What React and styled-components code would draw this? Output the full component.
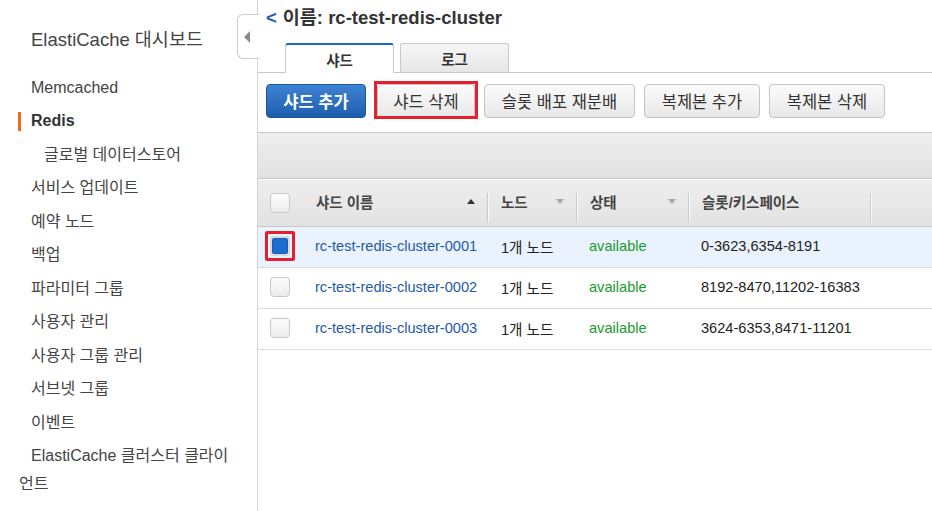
import React from "react";
import styled, { createGlobalStyle, css } from "styled-components";

const GlobalStyle = createGlobalStyle`
  html, body {
    margin: 0;
    padding: 0;
    background: #fff;
    font-family: "Liberation Sans", "Noto Sans CJK KR", sans-serif;
    color: #333;
  }
`;

const Page = styled.div`
  display: flex;
  min-height: 100vh;
  overflow: hidden;
`;

const Sidebar = styled.nav`
  position: relative;
  width: 258px;
  flex-shrink: 0;
  border-right: 1px solid #d5d5d5;
  padding-top: 27px;
  box-sizing: border-box;
`;

const SideTitle = styled.div`
  padding-left: 31px;
  font-size: 18.5px;
  line-height: 26px;
  color: #444;
  margin-bottom: 18px;
`;

const SideItem = styled.div`
  position: relative;
  padding: 2.75px 22px 2.75px 19px;
  text-indent: ${(p) => (p.$sub ? 25 : 12)}px;
  font-size: 16px;
  line-height: 28px;
  color: #444;

  ${(p) =>
    p.$active &&
    css`
      font-weight: bold;
      color: #333;
      &::before {
        content: "";
        position: absolute;
        left: 18px;
        top: 7px;
        width: 3px;
        height: 19px;
        background: #f26b1d;
      }
    `}
`;

const CollapseTab = styled.div`
  position: absolute;
  top: 14px;
  left: 237px;
  width: 21px;
  height: 43px;
  background: #fff;
  border: 1px solid #ccc;
  border-right: none;
  border-radius: 6px 0 0 6px;
  display: flex;
  align-items: center;
  justify-content: center;

  &::after {
    content: "";
    border-style: solid;
    border-width: 6px 6px 6px 0;
    border-color: transparent #8a8a8a transparent transparent;
    margin-left: -3px;
  }
`;

const Main = styled.main`
  flex: 1;
  min-width: 0;
`;

const Title = styled.h1`
  margin: 0;
  padding-left: 8px;
  height: 36px;
  line-height: 36px;
  font-size: 18.5px;
  font-weight: bold;
  color: #333;

  span {
    color: #1a5fb4;
    margin-right: 6px;
  }
`;

const TabBar = styled.div`
  display: flex;
  gap: 6px;
  margin-top: 7px;
  padding-left: 27px;
  border-bottom: 1px solid #c8c8c8;
  height: 29px;
`;

const Tab = styled.div`
  width: 109px;
  height: 29px;
  box-sizing: border-box;
  border: 1px solid #c8c8c8;
  border-bottom: none;
  border-radius: 3px 3px 0 0;
  display: flex;
  align-items: center;
  justify-content: center;
  font-size: 14.5px;
  font-weight: bold;
  color: #333;
  background: ${(p) =>
    p.$active ? "#fff" : "linear-gradient(#f6f6f6, #e6e6e6)"};
  ${(p) =>
    p.$active &&
    css`
      border-top: 2px solid #1a66c2;
      height: 30px;
      margin-bottom: -1px;
    `}
`;

const Toolbar = styled.div`
  display: flex;
  gap: 9px;
  padding: 11px 8px 14px;
`;

const Button = styled.button`
  position: relative;
  width: ${(p) => p.$w}px;
  height: 34px;
  box-sizing: border-box;
  border-radius: 4px;
  font-family: inherit;
  font-size: 16.5px;
  padding: 0;
  cursor: pointer;
  border: 1px solid #c4c4c4;
  color: #333;
  background: linear-gradient(#fbfbfb, #e8e8e8);
  ${(p) =>
    p.$primary &&
    css`
      border-color: #1b56a0;
      color: #fff;
      font-weight: bold;
      background: linear-gradient(#3d82d4, #1e5eac);
    `}
  ${(p) =>
    p.$marked &&
    css`
      &::after {
        content: "";
        position: absolute;
        inset: -4px -4px -2px -4px;
        border: 3px solid #e3202b;
      }
    `}
`;

const FilterBar = styled.div`
  height: 45px;
  border-top: 1px solid #c8c8c8;
  border-bottom: 1px solid #c8c8c8;
  background: linear-gradient(#efefef, #e1e1e1);
`;

const cols = "45px 185px 89px 112px 182px 1fr";

const HeadRow = styled.div`
  display: grid;
  grid-template-columns: ${cols};
  height: 46px;
  border-top: 1px solid #fff;
  border-bottom: 1px solid #c8c8c8;
  background: linear-gradient(#eeeeee, #e2e2e2);
  align-items: center;
`;

const HeadCell = styled.div`
  position: relative;
  display: flex;
  align-items: center;
  justify-content: space-between;
  height: 100%;
  padding: 0 13px 3px;
  box-sizing: border-box;
  font-size: 14.5px;
  font-weight: bold;
  color: #444;
  ${(p) =>
    p.$sep &&
    css`
      &::after {
        content: "";
        position: absolute;
        right: 0;
        top: 13px;
        bottom: 4px;
        width: 1px;
        background: #c9c9c9;
        box-shadow: 1px 0 0 #fafafa;
      }
    `}
`;

const SortArrow = styled.span`
  width: 0;
  height: 0;
  border-left: 4px solid transparent;
  border-right: 4px solid transparent;
  ${(p) =>
    p.$up
      ? css`
          border-bottom: 5px solid #333;
        `
      : css`
          border-top: 5px solid #a8a8a8;
        `}
`;

const Row = styled.div`
  display: grid;
  grid-template-columns: ${cols};
  height: 40px;
  border-bottom: 1px solid #dcdcdc;
  align-items: center;
  background: ${(p) => (p.$selected ? "#eaf2fd" : "#fff")};
  font-size: 14.6px;
  padding-bottom: 2px;
  box-sizing: content-box;
  height: 38px;
`;

const Cell = styled.div`
  padding-left: ${(p) => p.$pad ?? 12}px;
  color: ${(p) => p.$color || "#222"};
  white-space: nowrap;
`;

const CheckWrap = styled.div`
  padding-left: 12px;
  display: flex;
  align-items: center;
`;

const Check = styled.span`
  position: relative;
  display: block;
  width: 20px;
  height: 20px;
  box-sizing: border-box;
  border-radius: 4px;
  border: 1px solid #c9c9c9;
  background: linear-gradient(#fdfdfd, #ececec);
  ${(p) =>
    p.$checked &&
    css`
      border: 2px solid #d9d9d9;
      background: #1b6cce;
      box-shadow: inset 0 0 0 1px #1660b8;
      &::after {
        content: "";
        position: absolute;
        inset: -7px;
        border: 3px solid #e3202b;
        border-radius: 2px;
      }
    `}
`;

const menu = [
  { label: "Memcached" },
  { label: "Redis", active: true },
  { label: "글로벌 데이터스토어", sub: true },
  { label: "서비스 업데이트" },
  { label: "예약 노드" },
  { label: "백업" },
  { label: "파라미터 그룹" },
  { label: "사용자 관리" },
  { label: "사용자 그룹 관리" },
  { label: "서브넷 그룹" },
  { label: "이벤트" },
  { label: "ElastiCache 클러스터 클라이언트" },
];

const shards = [
  { name: "rc-test-redis-cluster-0001", slots: "0-3623,6354-8191", selected: true },
  { name: "rc-test-redis-cluster-0002", slots: "8192-8470,11202-16383" },
  { name: "rc-test-redis-cluster-0003", slots: "3624-6353,8471-11201" },
];

export default function App() {
  return (
    <Page>
      <GlobalStyle />
      <Sidebar>
        <SideTitle>ElastiCache 대시보드</SideTitle>
        {menu.map((m) => (
          <SideItem key={m.label} $active={m.active} $sub={m.sub}>
            {m.label}
          </SideItem>
        ))}
        <CollapseTab />
      </Sidebar>

      <Main>
        <Title>
          <span>&lt;</span>이름: rc-test-redis-cluster
        </Title>
        <TabBar>
          <Tab $active>샤드</Tab>
          <Tab>로그</Tab>
        </TabBar>

        <Toolbar>
          <Button $primary $w={100}>샤드 추가</Button>
          <Button $marked $w={98} style={{ marginLeft: 2 }}>샤드 삭제</Button>
          <Button $w={151}>슬롯 배포 재분배</Button>
          <Button $w={116}>복제본 추가</Button>
          <Button $w={116}>복제본 삭제</Button>
        </Toolbar>

        <FilterBar />

        <HeadRow>
          <CheckWrap>
            <Check />
          </CheckWrap>
          <HeadCell $sep style={{ marginLeft: -45, paddingLeft: 58 }}>
            샤드 이름 <SortArrow $up />
          </HeadCell>
          <HeadCell $sep>
            노드 <SortArrow />
          </HeadCell>
          <HeadCell $sep>
            상태 <SortArrow />
          </HeadCell>
          <HeadCell $sep>슬롯/키스페이스</HeadCell>
          <div />
        </HeadRow>

        {shards.map((s) => (
          <Row key={s.name} $selected={s.selected}>
            <CheckWrap>
              <Check $checked={s.selected} />
            </CheckWrap>
            <Cell $color="#1f5aa8">{s.name}</Cell>
            <Cell $pad={13}>1개 노드</Cell>
            <Cell $color="#1a9b2f">available</Cell>
            <Cell>{s.slots}</Cell>
            <div />
          </Row>
        ))}
      </Main>
    </Page>
  );
}
